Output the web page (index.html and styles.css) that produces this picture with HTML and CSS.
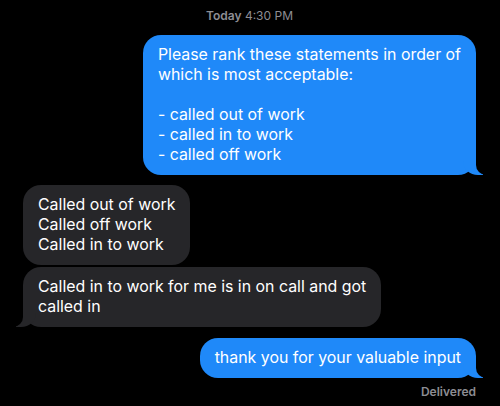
FILE: index.html
```
<!DOCTYPE html>
<html lang="en">
<head>
  <meta charset="UTF-8">
  <title>Messages</title>
  <link rel="stylesheet" href="styles.css">
</head>
<body>
  <div class="thread">
    <div class="timestamp"><b>Today</b> 4:30 PM</div>

    <div class="bubble sent first">Please rank these statements in order of<br>which is most acceptable:<br><br>- called out of work<br>- called in to work<br>- called off work</div>

    <div class="bubble received first">Called out of work<br>Called off work<br>Called in to work</div>
    <div class="bubble received last">Called in to work for me is in on call and got<br>called in</div>

    <div class="bubble sent last">thank you for your valuable input</div>
    <div class="status">Delivered</div>
  </div>
</body>
</html>
```

FILE: styles.css
```
body {
  margin: 0;
  background: #000;
  font-family: Inter, "Noto Sans", sans-serif;
  color: #fff;
}

.thread {
  display: flex;
  flex-direction: column;
  padding: 8px 24px 0 23px;
}

.timestamp {
  align-self: center;
  font-size: 12px;
  line-height: 16px;
  color: #8d8d93;
  margin-bottom: 11px;
}

.timestamp b {
  font-weight: 600;
}

.bubble {
  position: relative;
  font-size: 15.9px;
  line-height: 20px;
  padding: 10px 15px;
  border-radius: 18px;
  max-width: 380px;
}

.sent {
  align-self: flex-end;
  background: #1f89f9;
}

.received {
  align-self: flex-start;
  background: #262629;
}

.sent.first {
  margin-bottom: 10px;
}

.received.first {
  margin-bottom: 2px;
}

.received.last {
  margin-bottom: 11px;
}

/* tails */
.bubble.sent::before,
.bubble.received.last::before {
  content: "";
  position: absolute;
  bottom: 0;
  height: 18px;
  width: 20px;
}

.bubble.sent::after,
.bubble.received.last::after {
  content: "";
  position: absolute;
  bottom: 0;
  width: 10px;
  height: 20px;
  background: #000;
}

.bubble.sent::before {
  right: -7px;
  background: #1f89f9;
  border-bottom-left-radius: 15px 14px;
}

.bubble.sent::after {
  right: -10px;
  border-bottom-left-radius: 10px;
}

.bubble.received.last::before {
  left: -7px;
  background: #262629;
  border-bottom-right-radius: 15px 14px;
}

.bubble.received.last::after {
  left: -10px;
  border-bottom-right-radius: 10px;
}

.status {
  align-self: flex-end;
  font-size: 12px;
  line-height: 16px;
  font-weight: 600;
  color: #8d8d93;
  margin-top: 6px;
}
```
